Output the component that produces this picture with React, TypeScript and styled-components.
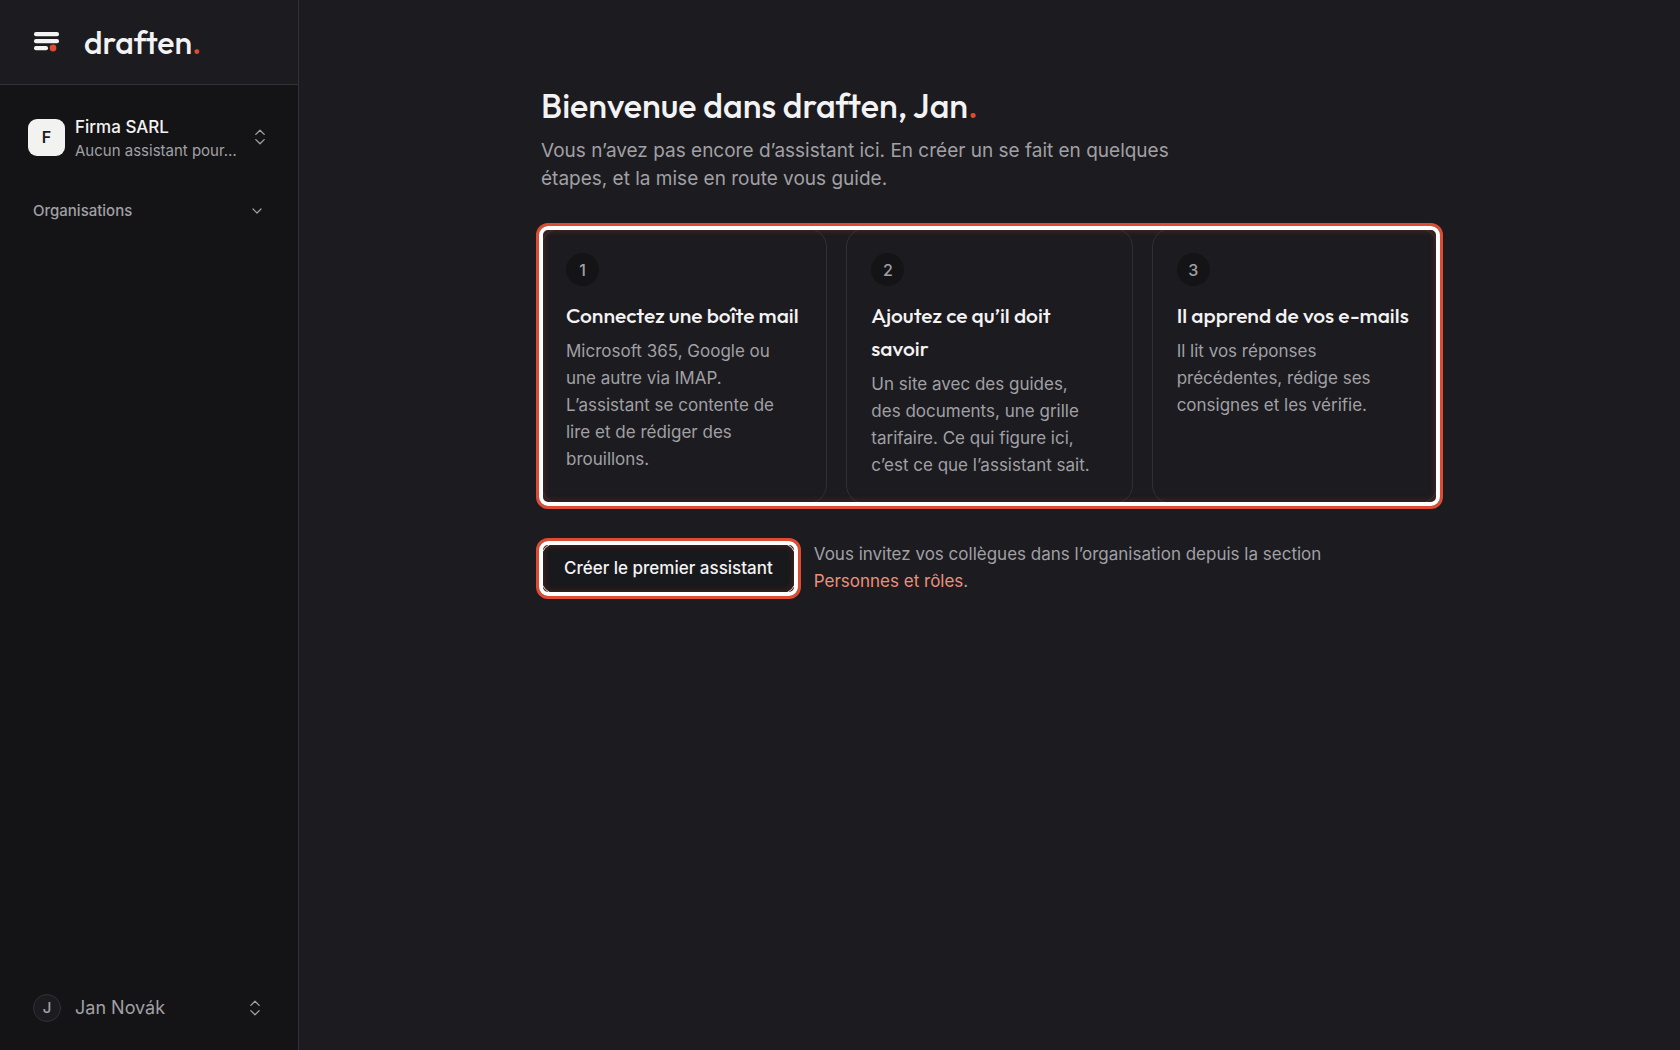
import React from "react";
import styled, { createGlobalStyle, css } from "styled-components";
import { ChevronDown } from "lucide-react";

const body = `Inter, "Liberation Sans", sans-serif`;
const display = `Outfit, Lato, "Liberation Sans", sans-serif`;
const c = {
  page: "#1c1b1f",
  side: "#141416",
  line: "#323136",
  text: "#f4f3f4",
  muted: "#a1a0a5",
  accent: "#dd4b32",
  link: "#ec8f7b",
};

const Global = createGlobalStyle`
  *, *::before, *::after { box-sizing: border-box; }
  body { margin: 0; background: ${c.page}; color: ${c.text}; font-family: ${body}; }
  h1, h2, p, ol { margin: 0; padding: 0; }
`;

const Layout = styled.div`
  display: grid;
  grid-template-columns: 299px 1fr;
  min-height: 100vh;
`;

const Sidebar = styled.aside`
  display: flex;
  flex-direction: column;
  background: ${c.side};
  border-right: 1px solid ${c.line};
`;

const Brand = styled.a`
  display: flex;
  align-items: center;
  gap: 24px;
  height: 85px;
  padding-left: 34px;
  background: ${c.page};
  border-bottom: 1px solid ${c.line};
  color: ${c.text};
  text-decoration: none;
`;

const Wordmark = styled.span`
  font: 500 32px/40px ${display};
`;

const Dot = styled.span`
  color: ${c.accent};
`;

const SideBody = styled.nav`
  display: flex;
  flex-direction: column;
  flex: 1;
  padding: 27px 24px 24px 28px;
`;

const SideButton = styled.button`
  display: flex;
  align-items: center;
  border: 0;
  background: none;
  color: ${c.muted};
  font-family: inherit;
  text-align: left;
  cursor: pointer;
`;

const Switcher = styled(SideButton)`
  gap: 10px;
  height: 50px;
  padding: 0 9px 0 0;
`;

const OrgBadge = styled.span`
  display: grid;
  place-items: center;
  flex: none;
  width: 37px;
  height: 37px;
  border-radius: 9px;
  background: #f2f2f0;
  color: #1d1c20;
  font-size: 16px;
  font-weight: 600;
`;

const OrgText = styled.span`
  display: flex;
  flex-direction: column;
  flex: 1;
  padding-top: 3px;
  white-space: nowrap;
`;

const OrgName = styled.span`
  color: ${c.text};
  font-size: 17px;
  font-weight: 500;
  line-height: 24px;
`;

const OrgNote = styled.span`
  font-size: 15px;
  line-height: 24px;
`;

const Section = styled(SideButton)`
  justify-content: space-between;
  margin-top: 37px;
  padding: 0 9px 0 5px;
  font-size: 15px;
  font-weight: 500;
  line-height: 24px;
`;

const Account = styled(SideButton)`
  gap: 14px;
  margin-top: auto;
  padding: 0 14px 0 5px;
  font-size: 18px;
  line-height: 36px;
`;

const Avatar = styled.span`
  display: grid;
  place-items: center;
  width: 28px;
  height: 28px;
  border: 1px solid ${c.line};
  border-radius: 50%;
  background: ${c.page};
  font-size: 15px;
  font-weight: 500;
  line-height: 24px;
`;

const AccountName = styled.span`
  flex: 1;
`;

const Main = styled.main`
  padding: 84px 32px 32px;
`;

const Content = styled.div`
  max-width: 897px;
  margin: 0 auto;
`;

const Title = styled.h1`
  font: 500 34px/44px ${display};
`;

const Lead = styled.p`
  max-width: 640px;
  margin-top: 9px;
  color: ${c.muted};
  font-size: 19px;
  line-height: 28px;
`;

const spotlight = css`
  position: relative;
  &::after {
    content: "";
    position: absolute;
    inset: -5px;
    border: 3px solid ${c.accent};
    border-radius: 12px;
    pointer-events: none;
  }
  &::before {
    content: "";
    position: absolute;
    inset: -2px;
    border: 4px solid #fff;
    border-radius: 9px;
    box-shadow: inset 0 0 7px rgba(221, 75, 50, 0.3);
    pointer-events: none;
    z-index: 1;
  }
`;

const Steps = styled.ol`
  display: grid;
  grid-template-columns: repeat(3, 1fr);
  gap: 19px;
  margin-top: 35px;
  list-style: none;
  ${spotlight}
`;

const Step = styled.li`
  padding: 24px;
  border: 1px solid #302f34;
  border-radius: 19px;
`;

const StepNumber = styled.span`
  display: grid;
  place-items: center;
  width: 33px;
  height: 33px;
  border-radius: 50%;
  background: ${c.side};
  color: ${c.muted};
  font-size: 16px;
  font-weight: 500;
`;

const StepTitle = styled.h2`
  margin-top: 13px;
  font: 500 21px/33px ${display};
`;

const StepText = styled.p`
  margin-top: 6px;
  padding-right: 8px;
  color: ${c.muted};
  font-size: 17px;
  line-height: 27px;
`;

const Actions = styled.div`
  display: flex;
  align-items: center;
  gap: 18px;
  margin-top: 37px;
`;

const Highlight = styled.div`
  display: flex;
  flex: none;
  ${spotlight}
`;

const Primary = styled.button`
  height: 51px;
  padding: 0 22px;
  border: 1px solid ${c.text};
  border-radius: 14px;
  background: #18191c;
  color: ${c.text};
  font-family: inherit;
  font-size: 17px;
  font-weight: 500;
  cursor: pointer;
`;

const Note = styled.p`
  max-width: 560px;
  color: ${c.muted};
  font-size: 17px;
  line-height: 27px;
`;

const Link = styled.a`
  color: ${c.link};
  text-decoration: none;
`;

const Mark = () => (
  <svg width="26" height="20" viewBox="0 0 26 20" aria-hidden="true">
    <rect x="0" y="0" width="25" height="4.2" rx="2" fill={c.text} />
    <rect x="0" y="7" width="25" height="4.2" rx="2" fill={c.text} />
    <rect x="0" y="14" width="14" height="4.2" rx="2" fill={c.text} />
    <circle cx="19" cy="16" r="3.4" fill={c.accent} />
  </svg>
);

const UpDown = () => (
  <svg width="10" height="16" viewBox="0 0 10 16" fill="none" stroke={c.muted} strokeWidth="1.3" strokeLinecap="round" strokeLinejoin="round" aria-hidden="true">
    <path d="M.8 5.4 5 1.3l4.2 4.1M.8 10.6 5 14.7l4.2-4.1" />
  </svg>
);

const steps = [
  {
    title: "Connectez une boîte mail",
    text: "Microsoft 365, Google ou une autre via IMAP. L’assistant se contente de lire et de rédiger des brouillons.",
  },
  {
    title: "Ajoutez ce qu’il doit savoir",
    text: "Un site avec des guides, des documents, une grille tarifaire. Ce qui figure ici, c’est ce que l’assistant sait.",
  },
  {
    title: "Il apprend de vos e-mails",
    text: "Il lit vos réponses précédentes, rédige ses consignes et les vérifie.",
  },
];

export default function App() {
  return (
    <Layout>
      <Global />
      <Sidebar>
        <Brand href="#">
          <Mark />
          <Wordmark>draften<Dot>.</Dot></Wordmark>
        </Brand>
        <SideBody>
          <Switcher type="button">
            <OrgBadge>F</OrgBadge>
            <OrgText>
              <OrgName>Firma SARL</OrgName>
              <OrgNote>Aucun assistant pour…</OrgNote>
            </OrgText>
            <UpDown />
          </Switcher>
          <Section type="button" aria-expanded="false">
            Organisations
            <ChevronDown size={16} strokeWidth={1.8} />
          </Section>
          <Account type="button">
            <Avatar>J</Avatar>
            <AccountName>Jan Novák</AccountName>
            <UpDown />
          </Account>
        </SideBody>
      </Sidebar>
      <Main>
        <Content>
          <Title>Bienvenue dans draften, Jan<Dot>.</Dot></Title>
          <Lead>
            Vous n’avez pas encore d’assistant ici. En créer un se fait en quelques étapes, et la mise en route vous guide.
          </Lead>
          <Steps>
            {steps.map((step, i) => (
              <Step key={step.title}>
                <StepNumber>{i + 1}</StepNumber>
                <StepTitle>{step.title}</StepTitle>
                <StepText>{step.text}</StepText>
              </Step>
            ))}
          </Steps>
          <Actions>
            <Highlight>
              <Primary type="button">Créer le premier assistant</Primary>
            </Highlight>
            <Note>
              Vous invitez vos collègues dans l’organisation depuis la section <Link href="#">Personnes et rôles</Link>.
            </Note>
          </Actions>
        </Content>
      </Main>
    </Layout>
  );
}
